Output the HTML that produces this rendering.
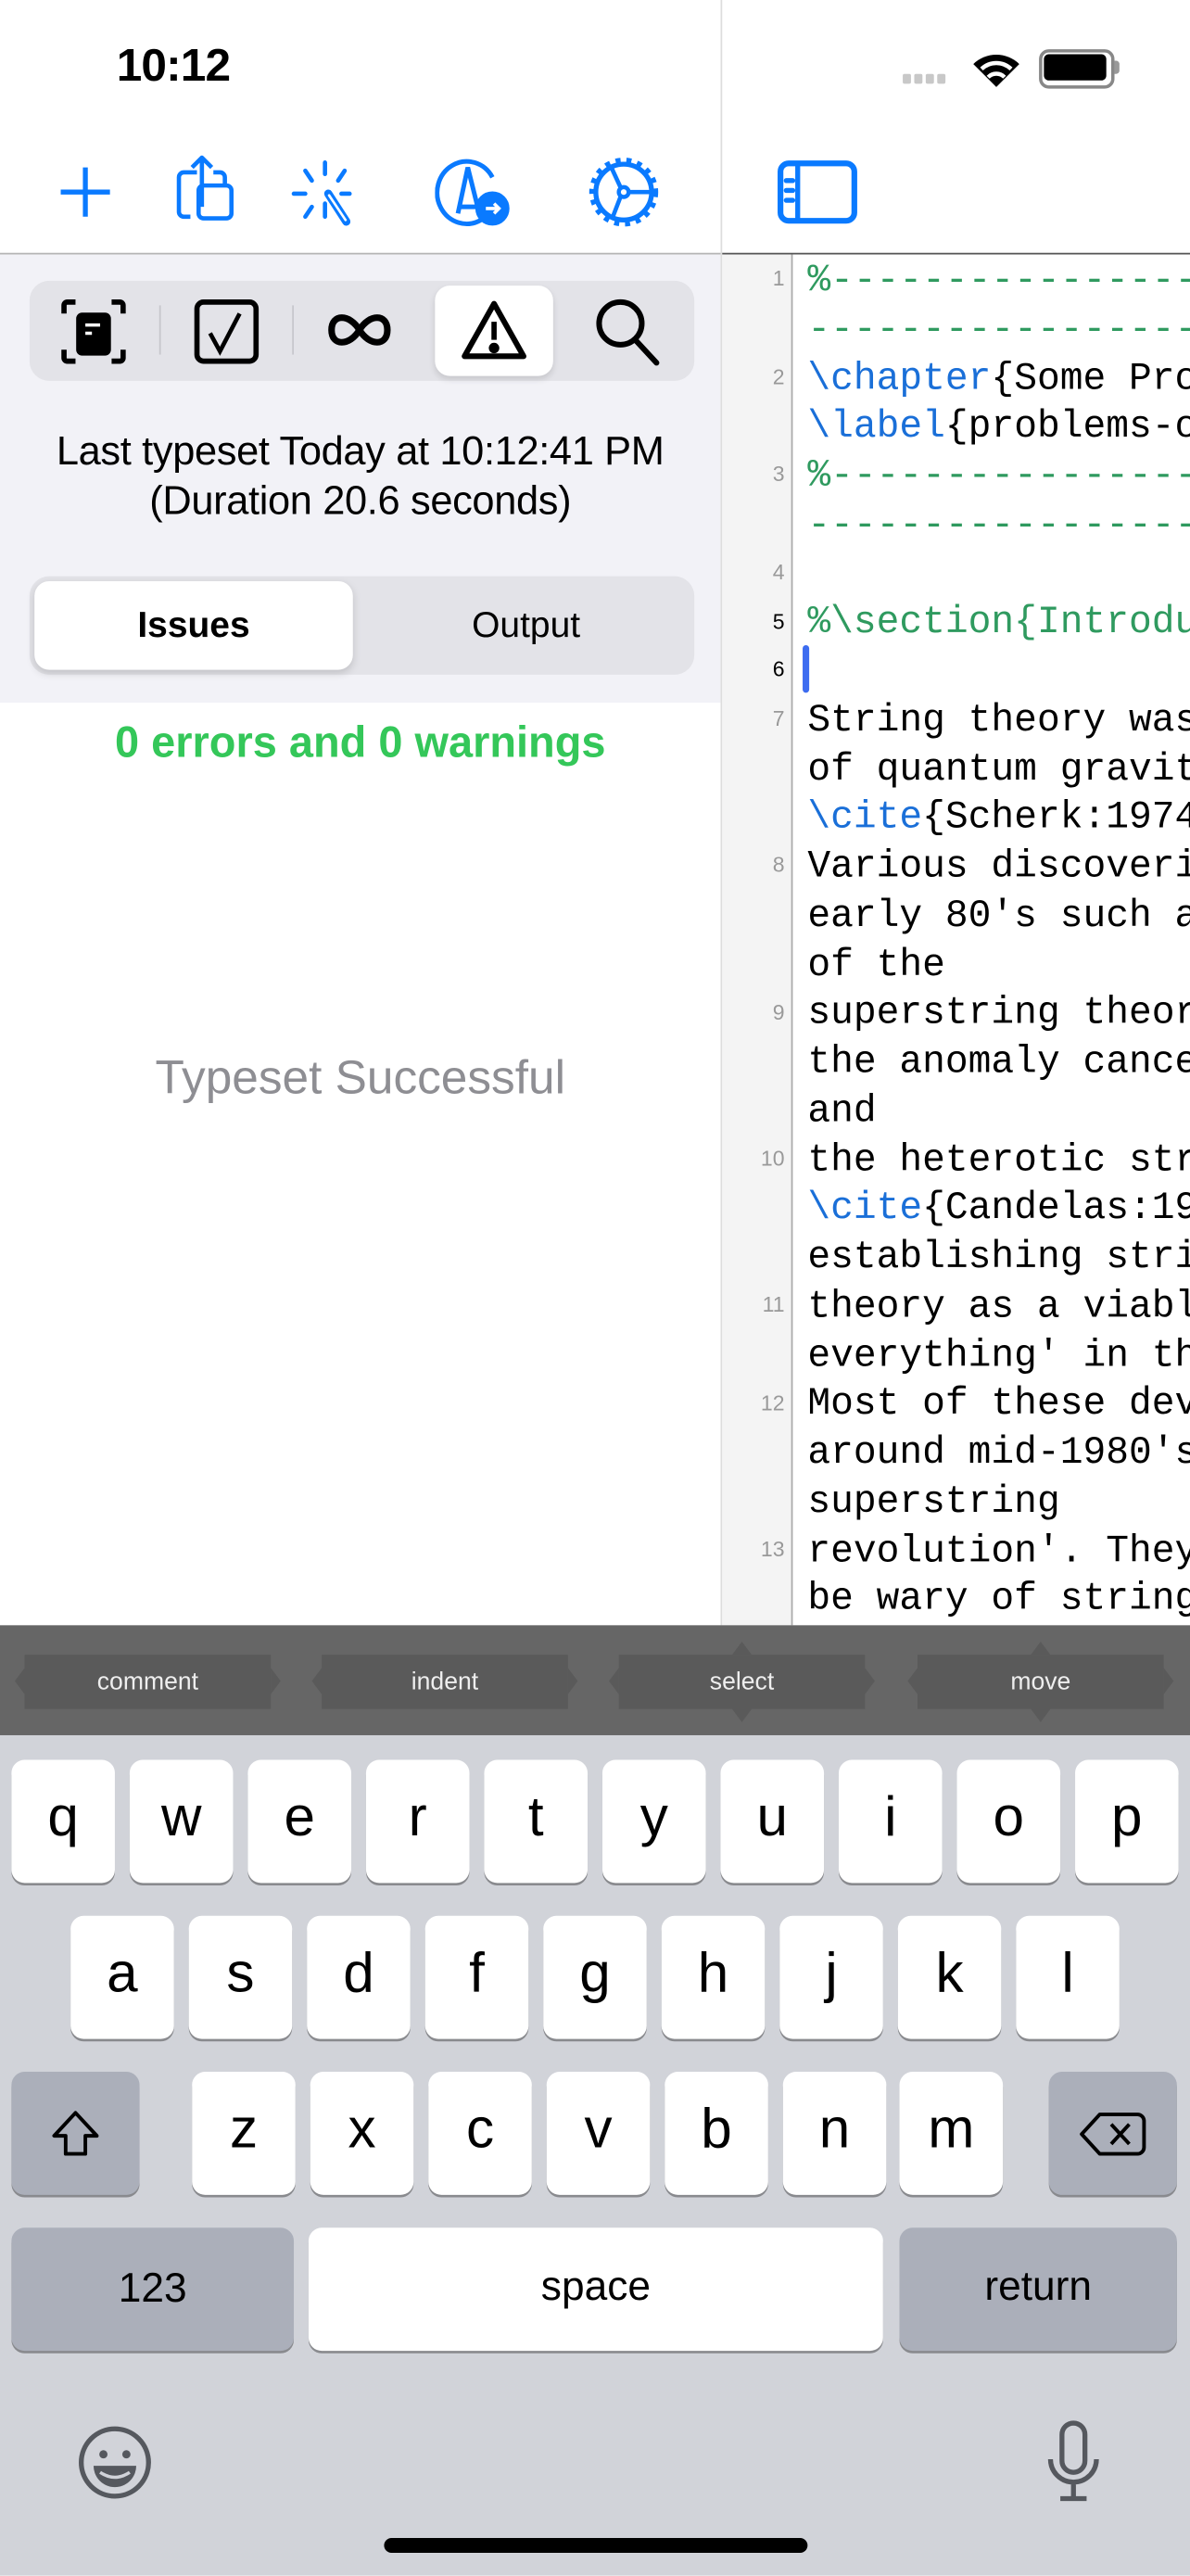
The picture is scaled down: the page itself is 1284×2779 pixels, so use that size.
<!DOCTYPE html>
<html><head><meta charset="utf-8">
<style>
html,body{margin:0;padding:0;width:1284px;height:2778px;overflow:hidden;background:#fff}
#s{position:absolute;left:0;top:0;width:725px;height:1569px;transform:scale(1.771034);transform-origin:0 0;font-family:"Liberation Sans",sans-serif;overflow:hidden;background:#fff}
.a{position:absolute}
.code{position:absolute;left:492px;top:157px;font-family:"Liberation Mono",monospace;font-size:23.3px;line-height:29.75px;white-space:pre;color:#000}
.g{color:#2f9a5f}.b{color:#1a6fd8}
.ln{position:absolute;left:440px;width:38px;text-align:right;font-family:"Liberation Sans",sans-serif;font-size:13px;color:#999}
.key{position:absolute;background:#fff;border-radius:8px;box-shadow:0 1.5px 0 #898a8e;text-align:center;font-size:34px;color:#000}
.gk{background:#abafba}
.acc{position:absolute;top:1008px;height:33px;width:150px;background:#5a5a5a;color:#eee;font-size:15px;line-height:33px;text-align:center}
.acc:before,.acc:after{content:"";position:absolute;top:8px;border-top:8px solid transparent;border-bottom:8px solid transparent}
.acc:before{left:-6px;border-right:6px solid #5a5a5a}
.acc:after{right:-6px;border-left:6px solid #5a5a5a}
</style></head><body><div id="s">
<div class="a" style="left:71px;top:24px;font-size:28px;font-weight:bold;letter-spacing:-0.5px">10:12</div>
<div class="a" style="left:550px;top:45px;width:30px;height:6px">
 <div class="a" style="left:0;width:5px;height:6px;background:#c8c8c8;border-radius:1px"></div>
 <div class="a" style="left:7px;width:5px;height:6px;background:#c8c8c8;border-radius:1px"></div>
 <div class="a" style="left:14px;width:5px;height:6px;background:#c8c8c8;border-radius:1px"></div>
 <div class="a" style="left:21px;width:5px;height:6px;background:#c8c8c8;border-radius:1px"></div>
</div>
<svg class="a" style="left:591px;top:29px" width="32" height="26" viewBox="0 0 32 26"><path d="M16 24 L2 10 A20 20 0 0 1 30 10 Z" fill="#000"/><path d="M7 13 A13 13 0 0 1 25 13" stroke="#fff" stroke-width="2.5" fill="none"/><path d="M11 18 A7 7 0 0 1 21 18" stroke="#fff" stroke-width="2.5" fill="none"/></svg>
<div class="a" style="left:633px;top:30px;width:42px;height:20px;border:2px solid #888;border-radius:6px"></div>
<div class="a" style="left:636px;top:33px;width:38px;height:16px;background:#000;border-radius:3px"></div>
<div class="a" style="left:679px;top:37px;width:3px;height:8px;background:#999;border-radius:0 2px 2px 0"></div>
<svg class="a" style="left:30px;top:95px" width="44" height="44" viewBox="0 0 44 44" stroke="#0a7aff" stroke-width="3" fill="none"><path d="M22 7 V37 M7 22 H37"/></svg>
<svg class="a" style="left:104px;top:93px" width="44" height="50" viewBox="0 0 44 50" stroke="#0a7aff" stroke-width="2.6" fill="none" stroke-linejoin="round"><path d="M16 12 H8 a3 3 0 0 0 -3 3 V36 a3 3 0 0 0 3 3 H12"/><path d="M26 12 H30 a3 3 0 0 1 3 3 V20"/><path d="M19 3 V33 M13 9 L19 3 L25 9"/><rect x="17" y="20" width="20" height="20" rx="3"/></svg>
<svg class="a" style="left:176px;top:96px" width="44" height="44" viewBox="0 0 44 44" stroke="#0a7aff" stroke-width="2.6" fill="none" stroke-linecap="round"><path d="M22 3 V10 M22 28 V36 M3 22 H10 M32 22 H37 M10 8 L14 14 M34 8 L30 14 M10 36 L14 30"/><path d="M24 22 L35 39" stroke-width="5"/><path d="M24.5 23 L34.5 38" stroke="#fff" stroke-width="1.5"/></svg>
<svg class="a" style="left:265px;top:96px" width="46" height="44" viewBox="0 0 46 44" stroke="#0a7aff" stroke-width="2.8" fill="none"><path d="M28 38 A18 19 0 1 1 35 12"/><path d="M14 34 L20 6 L26 30 M15 30 H25"/><circle cx="35" cy="31" r="9" fill="#0a7aff"/><path d="M31 31 H39 M36 28 L39 31 L36 34" stroke="#fff" stroke-width="2"/></svg>
<svg class="a" style="left:357px;top:93px" width="46" height="48" viewBox="0 0 46 48" fill="none" stroke="#0a7aff"><circle cx="23" cy="24" r="17" stroke-width="3"/><circle cx="23" cy="24" r="19" stroke-width="4" stroke-dasharray="3 3.5"/><circle cx="23" cy="24" r="3" stroke-width="2.5"/><path d="M26 24 H40 M21 21 L15 8 M21 27 L16 40" stroke-width="2.6"/></svg>
<svg class="a" style="left:473px;top:97px" width="50" height="40" viewBox="0 0 50 40" fill="none" stroke="#0a7aff"><rect x="2.5" y="2.5" width="45" height="35" rx="5" stroke-width="3.5"/><path d="M13 3 V37" stroke-width="3"/><path d="M6 13 H10 M6 19 H10 M6 25 H10" stroke-width="3" stroke-linecap="round"/></svg>
<div class="a" style="left:439px;top:0;width:1px;height:990px;background:#ddd"></div>
<div class="a" style="left:0;top:154px;width:439px;height:1px;background:#b5b5b5"></div>
<div class="a" style="left:440px;top:154px;width:285px;height:1px;background:#555"></div>
<div class="a" style="left:0;top:155px;width:439px;height:273px;background:#f2f2f7"></div>
<div class="a" style="left:18px;top:171px;width:405px;height:61px;background:#e3e3e8;border-radius:12px"></div>
<div class="a" style="left:265px;top:174px;width:72px;height:55px;background:#fff;border-radius:9px;box-shadow:0 2px 4px rgba(0,0,0,.12)"></div>
<div class="a" style="left:97px;top:186px;width:1px;height:30px;background:#c7c7cc"></div>
<div class="a" style="left:178px;top:186px;width:1px;height:30px;background:#c7c7cc"></div>
<svg class="a" style="left:36px;top:181px" width="42" height="42" viewBox="0 0 42 42" fill="none" stroke="#000" stroke-width="3.2"><path d="M10 3 H5 a2 2 0 0 0 -2 2 V10 M32 3 H37 a2 2 0 0 1 2 2 V10 M10 39 H5 a2 2 0 0 1 -2 -2 V32 M32 39 H37 a2 2 0 0 0 2 -2 V32"/><rect x="12" y="11" width="18" height="23" rx="2" fill="#000"/><path d="M16 17 H25 M16 22 H20" stroke="#fff" stroke-width="2"/></svg>
<svg class="a" style="left:117px;top:181px" width="42" height="42" viewBox="0 0 42 42" fill="none" stroke="#000"><rect x="3" y="3" width="36" height="36" rx="4" stroke-width="3.2"/><path d="M11 22 L17 33 L29 10" stroke-width="2.6"/></svg>
<svg class="a" style="left:199px;top:188px" width="40" height="26" viewBox="0 0 40 26" fill="none" stroke="#000" stroke-width="4"><path d="M20 13 C14 3 3 3 3 13 C3 23 14 23 20 13 C26 3 37 3 37 13 C37 23 26 23 20 13 Z"/></svg>
<svg class="a" style="left:280px;top:182px" width="42" height="38" viewBox="0 0 42 38" fill="none" stroke="#000" stroke-width="3.4" stroke-linejoin="round"><path d="M21 3 L3 35 H39 Z"/><path d="M21 14 V25" stroke-width="3.2"/><circle cx="21" cy="30" r="1.5" fill="#000"/></svg>
<svg class="a" style="left:360px;top:180px" width="44" height="44" viewBox="0 0 44 44" fill="none" stroke="#000" stroke-width="3.4" stroke-linecap="round"><circle cx="18" cy="17" r="13"/><path d="M27 27 L40 41"/></svg>
<div class="a" style="left:0;top:261px;width:439px;text-align:center;font-size:24.5px;line-height:30px;color:#000;letter-spacing:-0.2px">Last typeset Today at 10:12:41 PM<br>(Duration 20.6 seconds)</div>
<div class="a" style="left:18px;top:351px;width:405px;height:60px;background:#e3e3e8;border-radius:12px"></div>
<div class="a" style="left:21px;top:354px;width:194px;height:54px;background:#fff;border-radius:9px;box-shadow:0 2px 5px rgba(0,0,0,.15);text-align:center;line-height:54px;font-size:22px;font-weight:bold">Issues</div>
<div class="a" style="left:218px;top:354px;width:205px;height:54px;text-align:center;line-height:54px;font-size:22px">Output</div>
<div class="a" style="left:0;top:437px;width:439px;text-align:center;font-size:26.5px;font-weight:bold;color:#34c759">0 errors and 0 warnings</div>
<div class="a" style="left:0;top:641px;width:439px;text-align:center;font-size:29px;color:#8e8e93">Typeset Successful</div>
<div class="a" style="left:440px;top:155px;width:42px;height:835px;background:#f4f4f4"></div>
<div class="a" style="left:482px;top:155px;width:1px;height:835px;background:#aaa"></div>
<div class="ln" style="top:162px">1</div>
<div class="ln" style="top:222px">2</div>
<div class="ln" style="top:281px">3</div>
<div class="ln" style="top:341px">4</div>
<div class="ln" style="top:371px;color:#000">5</div>
<div class="ln" style="top:400px;color:#000">6</div>
<div class="ln" style="top:430px">7</div>
<div class="ln" style="top:519px">8</div>
<div class="ln" style="top:609px">9</div>
<div class="ln" style="top:698px">10</div>
<div class="ln" style="top:787px">11</div>
<div class="ln" style="top:847px">12</div>
<div class="ln" style="top:936px">13</div>
<div class="a" style="left:489px;top:393px;width:4px;height:29px;background:#3d6cf0;border-radius:2px"></div>
<div class="code"><span class="g">%-----------------
------------------</span>
<span class="b">\chapter</span>{Some Problems
<span class="b">\label</span>{problems-of
<span class="g">%-----------------
------------------</span>

<span class="g">%\section{Introduction</span>

String theory was
of quantum gravity
<span class="b">\cite</span>{Scherk:1974
Various discoverie
early 80's such as
of the
superstring theory
the anomaly cancel
and
the heterotic stri
<span class="b">\cite</span>{Candelas:198
establishing strin
theory as a viable
everything' in the
Most of these deve
around mid-1980's
superstring
revolution'. They
be wary of string</div>
<div class="a" style="left:0;top:990px;width:725px;height:67px;background:#666"></div>
<div class="acc" style="left:15px">comment</div>
<div class="acc" style="left:196px">indent</div>
<div class="acc" style="left:377px">select</div>
<div class="acc" style="left:559px">move</div>
<div class="a" style="left:446px;top:1000px;border:6px solid transparent;border-bottom:8px solid #5a5a5a;border-top:0"></div>
<div class="a" style="left:446px;top:1041px;border:6px solid transparent;border-top:8px solid #5a5a5a;border-bottom:0"></div>
<div class="a" style="left:628px;top:1000px;border:6px solid transparent;border-bottom:8px solid #5a5a5a;border-top:0"></div>
<div class="a" style="left:628px;top:1041px;border:6px solid transparent;border-top:8px solid #5a5a5a;border-bottom:0"></div>
<div class="a" style="left:0;top:1057px;width:725px;height:512px;background:#d1d3d9"></div>
<div class="key" style="left:7px;top:1072px;width:63px;height:75px;line-height:70px">q</div>
<div class="key" style="left:79px;top:1072px;width:63px;height:75px;line-height:70px">w</div>
<div class="key" style="left:151px;top:1072px;width:63px;height:75px;line-height:70px">e</div>
<div class="key" style="left:223px;top:1072px;width:63px;height:75px;line-height:70px">r</div>
<div class="key" style="left:295px;top:1072px;width:63px;height:75px;line-height:70px">t</div>
<div class="key" style="left:367px;top:1072px;width:63px;height:75px;line-height:70px">y</div>
<div class="key" style="left:439px;top:1072px;width:63px;height:75px;line-height:70px">u</div>
<div class="key" style="left:511px;top:1072px;width:63px;height:75px;line-height:70px">i</div>
<div class="key" style="left:583px;top:1072px;width:63px;height:75px;line-height:70px">o</div>
<div class="key" style="left:655px;top:1072px;width:63px;height:75px;line-height:70px">p</div>
<div class="key" style="left:43px;top:1167px;width:63px;height:75px;line-height:70px">a</div>
<div class="key" style="left:115px;top:1167px;width:63px;height:75px;line-height:70px">s</div>
<div class="key" style="left:187px;top:1167px;width:63px;height:75px;line-height:70px">d</div>
<div class="key" style="left:259px;top:1167px;width:63px;height:75px;line-height:70px">f</div>
<div class="key" style="left:331px;top:1167px;width:63px;height:75px;line-height:70px">g</div>
<div class="key" style="left:403px;top:1167px;width:63px;height:75px;line-height:70px">h</div>
<div class="key" style="left:475px;top:1167px;width:63px;height:75px;line-height:70px">j</div>
<div class="key" style="left:547px;top:1167px;width:63px;height:75px;line-height:70px">k</div>
<div class="key" style="left:619px;top:1167px;width:63px;height:75px;line-height:70px">l</div>
<div class="key gk" style="left:7px;top:1262px;width:78px;height:75px"><svg style="margin-top:22px" width="32" height="32" viewBox="0 0 32 32" fill="none" stroke="#000" stroke-width="2.2" stroke-linejoin="round"><path d="M16 3 L3 17 H10 V28 H22 V17 H29 Z"/></svg></div>
<div class="key" style="left:117px;top:1262px;width:63px;height:75px;line-height:70px">z</div>
<div class="key" style="left:189px;top:1262px;width:63px;height:75px;line-height:70px">x</div>
<div class="key" style="left:261px;top:1262px;width:63px;height:75px;line-height:70px">c</div>
<div class="key" style="left:333px;top:1262px;width:63px;height:75px;line-height:70px">v</div>
<div class="key" style="left:405px;top:1262px;width:63px;height:75px;line-height:70px">b</div>
<div class="key" style="left:477px;top:1262px;width:63px;height:75px;line-height:70px">n</div>
<div class="key" style="left:548px;top:1262px;width:63px;height:75px;line-height:70px">m</div>
<div class="key gk" style="left:639px;top:1262px;width:78px;height:75px"><svg style="margin-top:24px" width="42" height="28" viewBox="0 0 42 28" fill="none" stroke="#000" stroke-width="2.2" stroke-linejoin="round"><path d="M13 2 H36 a4 4 0 0 1 4 4 V22 a4 4 0 0 1 -4 4 H13 L2 14 Z"/><path d="M20 8 L31 20 M31 8 L20 20"/></svg></div>
<div class="key gk" style="left:7px;top:1357px;width:172px;height:75px;line-height:75px;font-size:25px">123</div>
<div class="key" style="left:188px;top:1357px;width:350px;height:75px;line-height:72px;font-size:25px">space</div>
<div class="key gk" style="left:548px;top:1357px;width:169px;height:75px;line-height:72px;font-size:25px">return</div>
<svg class="a" style="left:46px;top:1476px" width="48" height="48" viewBox="0 0 48 48" fill="none" stroke="#55585e" stroke-width="3"><circle cx="24" cy="24" r="20.5"/><circle cx="17" cy="19" r="2.5" fill="#55585e" stroke="none"/><circle cx="31" cy="19" r="2.5" fill="#55585e" stroke="none"/><path d="M11 26 H37 A13 13 0 0 1 11 26 Z" fill="#55585e" stroke="none"/><path d="M15 30 Q24 36 33 30" stroke="#d1d3d9" stroke-width="2"/></svg>
<svg class="a" style="left:636px;top:1474px" width="36" height="52" viewBox="0 0 36 52" fill="none" stroke="#55585e" stroke-width="3"><rect x="11" y="2" width="14" height="30" rx="7"/><path d="M4 24 A14 14 0 0 0 32 24 M18 38 V47 M10 48 H26"/></svg>
<div class="a" style="left:234px;top:1546px;width:258px;height:9px;background:#000;border-radius:5px"></div>
</div></body></html>
